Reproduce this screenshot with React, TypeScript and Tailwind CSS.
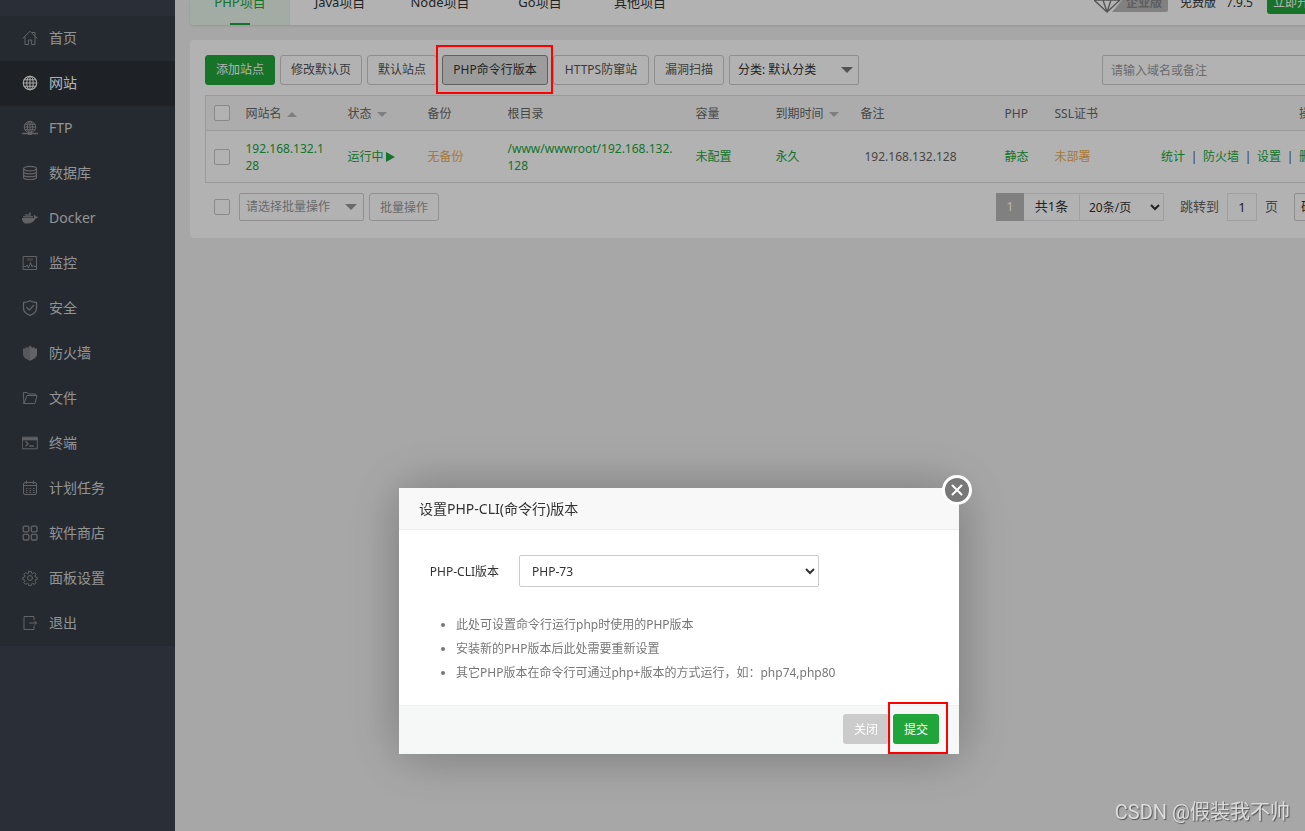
import type { ReactNode } from 'react';
import { FaDocker } from 'react-icons/fa';

function Line({ children, sw = 1 }: { children: ReactNode; sw?: number }) {
  return (
    <svg
      viewBox="0 0 16 16"
      className="size-4 shrink-0"
      fill="none"
      stroke="currentColor"
      strokeWidth={sw}
      strokeLinecap="round"
      strokeLinejoin="round"
      aria-hidden="true"
    >
      {children}
    </svg>
  );
}

const icons: Record<string, ReactNode> = {
  home: (
    <Line>
      <path d="M1 8.2 8 1.2l7 7M3 6.800v7.700h3.400V10h3.200v4.500H13V6.800M10.500 2.500h2.500v3" />
    </Line>
  ),
  globe: (
    <Line sw={1.1}>
      <circle cx="8" cy="8" r="6.7" />
      <ellipse cx="8" cy="8" rx="3.2" ry="6.7" />
      <path d="M8 1.3v13.4M1.3 8h13.4M2.2 4.8h11.6M2.2 11.2h11.6" />
    </Line>
  ),
  ftp: (
    <Line>
      <circle cx="8" cy="7" r="5.7" />
      <ellipse cx="8" cy="7" rx="2.7" ry="5.7" />
      <path d="M8 1.3v11.4M2.3 7h11.4M3 4.3h10M3 9.7h10" />
      <path d="M.5 13.5h15" strokeWidth="1.4" />
      <path d="M6.5 12.9h3v1.6h-3z" fill="currentColor" />
    </Line>
  ),
  database: (
    <Line sw={1.2}>
      <ellipse cx="8" cy="3.6" rx="6.5" ry="2.3" />
      <path d="M1.500 3.600v8.600c0 1.300 2.900 2.300 6.500 2.300s6.500-1 6.500-2.300V3.600M1.500 6.500c0 1.300 2.900 2.300 6.500 2.300s6.500-1 6.500-2.300M1.500 9.400c0 1.300 2.900 2.300 6.500 2.300s6.500-1 6.500-2.300" />
    </Line>
  ),
  docker: <FaDocker className="size-4 shrink-0" aria-hidden="true" />,
  monitor: (
    <Line>
      <path d="M1.500 1.500h13v13h-13z" />
      <path d="M5.500 3.500h5v2h-5z" fill="currentColor" opacity=".4" />
      <path d="M2 11.500h2l1-1.500 1.500 3 2-5.500 1.500 4.500 1-1.500 1 1h2" />
    </Line>
  ),
  shieldCheck: (
    <Line sw={1.3}>
      <path d="M8 .8c2 1.200 4.200 1.700 6.500 1.700v5.700c0 3.200-2.500 5.500-6.500 7.100-4-1.600-6.500-3.900-6.500-7.100V2.500C3.800 2.500 6 2 8 .8Z" />
      <path d="m4.800 7.500 2.500 2.600 4.200-4.600" />
    </Line>
  ),
  firewall: (
    <svg viewBox="0 0 16 16" className="size-4 shrink-0" fill="currentColor" aria-hidden="true">
      <path d="M8 .5 6.500 1.700v1H5V1.900L3.500 2.600v.8H1V9c0 3.200 3 5.300 7 6.700Z" opacity=".8" />
      <path d="m8 .5 1.500 1.200v1H11v-.8l1.500.7v.8H15V9c0 3.200-3 5.300-7 6.700Z" />
    </svg>
  ),
  folder: (
    <Line>
      <path d="M2 13.500 1.300 3V2.500h4l1.200 1.500h7V5.500M2 13.500h11l2-8H5L2 13.500Z" />
    </Line>
  ),
  terminal: (
    <Line>
      <path d="M.7 2.200h14.600v11.600H.7z" />
      <path d="M1 3.200h14v1.600H1z" fill="currentColor" />
      <path d="m4 6.800 2.200 2L4 10.800M7.800 11h3.400" strokeWidth="1.300" />
    </Line>
  ),
  calendar: (
    <Line>
      <rect x="1.500" y="2.500" width="13" height="12" rx="1.500" />
      <path d="M4.500 1v2.500M11.500 1v2.500M1.500 5.500h13" />
      <path d="M4 8.500h8.500M4 10.500h8.500M4 12.500h8.500" strokeDasharray="1.500 2" strokeLinecap="butt" />
    </Line>
  ),
  store: (
    <Line sw={1.3}>
      <rect x="1.200" y="1.200" width="5.600" height="5.600" rx="1.200" />
      <rect x="9.400" y="1.200" width="5.600" height="5.600" rx="1.200" />
      <rect x="1.200" y="9.400" width="5.600" height="5.600" rx="1.200" />
      <rect x="9.400" y="9.400" width="5.600" height="5.600" rx="1.200" />
    </Line>
  ),
  gear: (
    <Line>
      <circle cx="8" cy="8" r="2.500" />
      <path d="M6.800 1.300h2.400l.4 1.900 1.100.5 1.700-1.100 1.700 1.700-1.100 1.700.5 1.100 1.700.4v1.900l-1.900.5-.4 1.100 1.100 1.700-1.700 1.700-1.700-1.100-1.100.5-.4 1.900H6.800l-.4-1.900-1.100-.5-1.700 1.100-1.700-1.700L3 11l-.4-1.100-1.900-.5V7.500l1.800-.4.500-1.100-1.100-1.700 1.700-1.700 1.700 1.100 1.100-.5Z" />
    </Line>
  ),
  exit: (
    <Line>
      <path d="M12 4.500v-3H2v13h10v-3M7.500 8h7M12.500 6l2 2-2 2" />
    </Line>
  ),
};

const menu = [
  { icon: 'home', label: '首页' },
  { icon: 'globe', label: '网站', active: true },
  { icon: 'ftp', label: 'FTP' },
  { icon: 'database', label: '数据库' },
  { icon: 'docker', label: 'Docker' },
  { icon: 'monitor', label: '监控' },
  { icon: 'shieldCheck', label: '安全' },
  { icon: 'firewall', label: '防火墙' },
  { icon: 'folder', label: '文件' },
  { icon: 'terminal', label: '终端' },
  { icon: 'calendar', label: '计划任务' },
  { icon: 'store', label: '软件商店' },
  { icon: 'gear', label: '面板设置' },
  { icon: 'exit', label: '退出' },
];

function Sidebar() {
  return (
    <aside className="w-[175px] shrink-0 bg-[#3d4350] pt-4">
      <nav className="bg-[#363d45]">
        {menu.map((m) => (
          <a
            key={m.label}
            href="#"
            className={
              'flex h-[45px] items-center gap-[11px] pb-0.5 pl-[22px] text-sm ' +
              (m.active ? 'bg-[#2c3035] text-white' : 'text-[#d0d3d6]')
            }
          >
            <span className={m.active ? 'text-[#f0f0f0]' : 'text-[#8c8f93]'}>{icons[m.icon]}</span>
            {m.label}
          </a>
        ))}
      </nav>
    </aside>
  );
}

const tabs = ['PHP项目', 'Java项目', 'Node项目', 'Go项目', '其他项目'];

function TopBar() {
  return (
    <header className="flex h-[25px] items-end overflow-hidden rounded-b bg-white shadow-[0_1px_3px_rgba(0,0,0,0.12)]">
      {tabs.map((t, i) => (
        <button
          key={t}
          type="button"
          className={
            'flex h-11 w-[100px] shrink-0 flex-col items-center justify-between text-[13px] leading-[42px] ' +
            (i === 0 ? 'bg-[#e9f6ec] text-[#20a53a]' : 'text-[#333]')
          }
        >
          {t}
          {i === 0 && <span className="h-0.5 w-5 shrink-0 bg-[#20a53a]" />}
        </button>
      ))}
      <div className="ml-auto flex h-11 items-center pr-[22px] text-xs text-[#333]">
        <svg viewBox="0 0 74 22" className="h-[22px] w-[74px]" aria-hidden="true">
          <path d="M24 13 34 0h40v18a2 2 0 0 1-2 2H18Z" fill="#b9b9b9" />
          <path
            d="M0 8 6 1h14l6 7-13 12ZM0 8h26M6 1l3 7 4 12 4-12 3-7M9 8l4-7 4 7"
            fill="#fff"
            stroke="#777"
            strokeWidth="1.300"
            strokeLinejoin="round"
          />
        </svg>
        <span className="-ml-[42px] font-bold text-[#888]">企业版</span>
        <span className="ml-[18px]">免费版</span>
        <span className="ml-2.5">7.9.5</span>
        <button type="button" className="ml-3.5 h-[22px] rounded-[3px] bg-[#20a53a] px-1.5 text-white">
          立即升级
        </button>
      </div>
    </header>
  );
}

function Triangle({ up = false, className = '' }: { up?: boolean; className?: string }) {
  return (
    <svg viewBox="0 0 12 6" className={className} fill="currentColor" aria-hidden="true">
      <path d={up ? 'M0 6 6 0l6 6Z' : 'M0 0h12L6 6Z'} />
    </svg>
  );
}

function Check({ label }: { label: string }) {
  return (
    <input
      type="checkbox"
      aria-label={label}
      className="block size-4 appearance-none rounded-xs border border-[#c4c4c4] bg-white"
    />
  );
}

function Toolbar() {
  const btn = 'h-[30px] shrink-0 rounded-[3px] border text-center ';
  const plain = btn + 'border-[#ccc] bg-white text-[#555] ';
  return (
    <div className="flex items-center gap-[5px]">
      <button type="button" className={btn + 'w-[70px] border-[#20a53a] bg-[#20a53a] text-white'}>添加站点</button>
      <button type="button" className={plain + 'w-[82px]'}>修改默认页</button>
      <button type="button" className={plain + 'w-[70px]'}>默认站点</button>
      <div className="relative shrink-0">
        <button type="button" className={btn + 'block w-[106px] border-[#8c8c8c] bg-[#e0e0e0] text-[#333]'}>PHP命令行版本</button>
        <div className="pointer-events-none absolute -top-2.5 -right-[5px] -bottom-[9px] -left-1.5 z-20 border-2 border-[#f00]" />
      </div>
      <button type="button" className={plain + 'w-[96px]'}>HTTPS防窜站</button>
      <button type="button" className={plain + 'w-[70px]'}>漏洞扫描</button>
      <div className="relative shrink-0">
        <select
          aria-label="分类"
          className="block h-[30px] w-[130px] appearance-none rounded-xs border border-[#ccc] bg-white px-2 text-[#333]"
        >
          <option>分类: 默认分类</option>
        </select>
        <Triangle className="pointer-events-none absolute top-3 right-1.5 h-1.5 w-3 text-[#777]" />
      </div>
      <input
        type="text"
        aria-label="搜索站点"
        placeholder="请输入域名或备注"
        className="ml-auto h-[30px] w-[232px] rounded-xs border border-[#ccc] bg-white px-2 placeholder:text-[#999]"
      />
    </div>
  );
}

function SiteTable() {
  const green = 'text-[#20a53a]';
  return (
    <table className="mt-2.5 w-full table-fixed border-collapse border border-[#ddd] text-left text-[#666]">
      <colgroup>
        <col className="w-[32px]" />
        <col className="w-[102px]" />
        <col className="w-[80px]" />
        <col className="w-[80px]" />
        <col className="w-[188px]" />
        <col className="w-[80px]" />
        <col className="w-[85px]" />
        <col className="w-[144px]" />
        <col className="w-[50px]" />
        <col className="w-[80px]" />
        <col />
      </colgroup>
      <thead>
        <tr className="h-[35px] border-b border-[#ddd] bg-[#f6f6f6] [&>th]:px-2 [&>th]:font-normal [&>th:not(:first-child)]:pt-0.5">
          <th><Check label="全选" /></th>
          <th><span className="flex items-center gap-[5px]">网站名<Triangle up className="h-[5px] w-2.5 text-[#b5b5b5]" /></span></th>
          <th><span className="flex items-center gap-[5px]">状态<Triangle className="h-[5px] w-2.5 text-[#b5b5b5]" /></span></th>
          <th>备份</th>
          <th>根目录</th>
          <th>容量</th>
          <th><span className="flex items-center gap-[5px]">到期时间<Triangle className="h-[5px] w-2.5 text-[#b5b5b5]" /></span></th>
          <th>备注</th>
          <th>PHP</th>
          <th>SSL证书</th>
          <th className="text-right"><span className="pr-0.5">操作</span></th>
        </tr>
      </thead>
      <tbody>
        <tr className="h-[52px] [&>td]:px-2 [&>td]:leading-[17px]">
          <td><Check label="选择 192.168.132.128" /></td>
          <td><a href="#" className={'mr-1 block break-all ' + green}>192.168.132.128</a></td>
          <td>
            <a href="#" className={'flex items-center gap-0.5 ' + green}>
              运行中
              <svg viewBox="0 0 9 10" className="h-2.5 w-[9px]" fill="currentColor" aria-hidden="true">
                <path d="M0 0v10l9-5Z" />
              </svg>
            </a>
          </td>
          <td><a href="#" className="text-[#f0ad4e]">无备份</a></td>
          <td><a href="#" className={'mr-1 block break-all ' + green}>/www/wwwroot/192.168.132.128</a></td>
          <td><a href="#" className={green}>未配置</a></td>
          <td><a href="#" className={green}>永久</a></td>
          <td><input type="text" aria-label="备注" defaultValue="192.168.132.128" className="block w-full bg-transparent px-1" /></td>
          <td><a href="#" className={green}>静态</a></td>
          <td><a href="#" className="text-[#f0ad4e]">未部署</a></td>
          <td>
            <div className={'flex justify-end gap-[5px] pr-0.5 whitespace-nowrap ' + green}>
              <a href="#">统计</a>
              <span className="w-2 text-center text-[#555]">|</span>
              <a href="#">防火墙</a>
              <span className="w-2 text-center text-[#555]">|</span>
              <a href="#">设置</a>
              <span className="w-2 text-center text-[#555]">|</span>
              <a href="#">删除</a>
            </div>
          </td>
        </tr>
      </tbody>
    </table>
  );
}

function TableFooter() {
  return (
    <div className="mt-2.5 flex h-7 items-center pl-[9px]">
      <Check label="全选当前页" />
      <div className="relative ml-[9px]">
        <select
          aria-label="批量操作类型"
          className="block h-7 w-[125px] appearance-none rounded-xs border border-[#d0d0d0] bg-white px-1.5 text-[#999]"
        >
          <option>请选择批量操作</option>
        </select>
        <Triangle className="pointer-events-none absolute top-[11px] right-[7px] h-1.5 w-3 text-[#999]" />
      </div>
      <button type="button" className="ml-[5px] h-7 w-[70px] rounded-[3px] border border-[#d0d0d0] bg-white pt-0.5 text-[#999]">
        批量操作
      </button>
      <div className="ml-auto flex h-7 items-center text-[13px] text-[#333]">
        <span className="flex h-7 w-7 items-center justify-center bg-[#b8b8b8] text-white">1</span>
        <span className="flex h-7 w-[55px] items-center justify-center border-y border-[#e6e6e6]">共1条</span>
        <select aria-label="每页条数" className="h-7 w-[85px] border border-[#e6e6e6] bg-white pl-[5px] text-xs">
          <option>20条/页</option>
        </select>
        <label htmlFor="page-no" className="ml-4 text-[#666]">跳转到</label>
        <input
          id="page-no"
          type="text"
          defaultValue="1"
          className="ml-2 h-7 w-[30px] border border-[#e6e6e6] bg-white text-center"
        />
        <span className="ml-2 text-[#666]">页</span>
        <button type="button" className="ml-4 h-7 rounded-xs border border-[#ccc] px-1.5">确定</button>
      </div>
    </div>
  );
}

function Dialog() {
  return (
    <div
      role="dialog"
      aria-labelledby="dialog-title"
      className="fixed top-[488px] left-[399px] z-30 w-[560px] bg-white text-xs shadow-[1px_1px_50px_rgba(0,0,0,0.3)]"
    >
      <h2 id="dialog-title" className="h-[42px] border-b border-[#eee] bg-[#f8f8f8] pl-5 text-sm leading-[41px] text-[#333]">
        设置PHP-CLI(命令行)版本
      </h2>
      <button
        type="button"
        aria-label="关闭窗口"
        className="absolute -top-[13px] -right-[13px] flex size-[30px] items-center justify-center rounded-full border-3 border-white bg-[#787878] text-white"
      >
        <svg viewBox="0 0 12 12" className="size-3" stroke="currentColor" strokeWidth="2" strokeLinecap="round" aria-hidden="true">
          <path d="m1.500 1.500 9 9M10.500 1.500l-9 9" />
        </svg>
      </button>
      <div className="px-5 pt-[25px] pb-5">
        <div className="flex items-center">
          <label htmlFor="cli-version" className="w-20 pt-0.5 text-right text-[#333]">PHP-CLI版本</label>
          <select id="cli-version" className="ml-5 h-8 w-[300px] rounded-xs border border-[#ccc] bg-white pl-2 text-[#333]">
            <option>PHP-73</option>
          </select>
        </div>
        <ul className="mt-[26px] list-disc pl-[37px] leading-6 text-[#777]">
          <li>此处可设置命令行运行php时使用的PHP版本</li>
          <li>安装新的PHP版本后此处需要重新设置</li>
          <li>其它PHP版本在命令行可通过php+版本的方式运行，如：php74,php80</li>
        </ul>
      </div>
      <div className="flex justify-end gap-1 border-t border-[#edf1f2] bg-[#f6f8f8] px-5 pt-2 pb-2.5">
        <button type="button" className="h-[30px] w-[46px] rounded-[3px] bg-[#cbcbcb] pt-0.5 text-white">关闭</button>
        <div className="relative">
          <button type="button" className="block h-[30px] w-[46px] rounded-[3px] bg-[#20a53a] pt-0.5 text-white">提交</button>
          <div className="pointer-events-none absolute -top-3 -right-[9px] -bottom-2.5 -left-[5px] border-2 border-[#f00]" />
        </div>
      </div>
    </div>
  );
}

export default function App() {
  return (
    <div className="flex h-screen overflow-hidden bg-[#f0f0f0] font-['Noto_Sans','Noto_Sans_CJK_SC',sans-serif] text-xs">
      <Sidebar />
      <main className="min-w-0 flex-1 overflow-hidden pl-[15px]">
        <div className="min-w-[1159px]">
          <TopBar />
          <section className="mt-[15px] rounded bg-white px-[15px] pt-[15px] pb-[17px]">
            <Toolbar />
            <SiteTable />
            <TableFooter />
          </section>
        </div>
      </main>
      <div className="fixed inset-0 z-10 bg-black/30" />
      <Dialog />
      <p className="fixed right-[15px] bottom-[3px] z-30 font-['Roboto','Noto_Sans_CJK_SC',sans-serif] text-xl leading-8 text-[#dcdcdc] [text-shadow:1px_1px_1px_#555]">
        CSDN @假装我不帅
      </p>
    </div>
  );
}
